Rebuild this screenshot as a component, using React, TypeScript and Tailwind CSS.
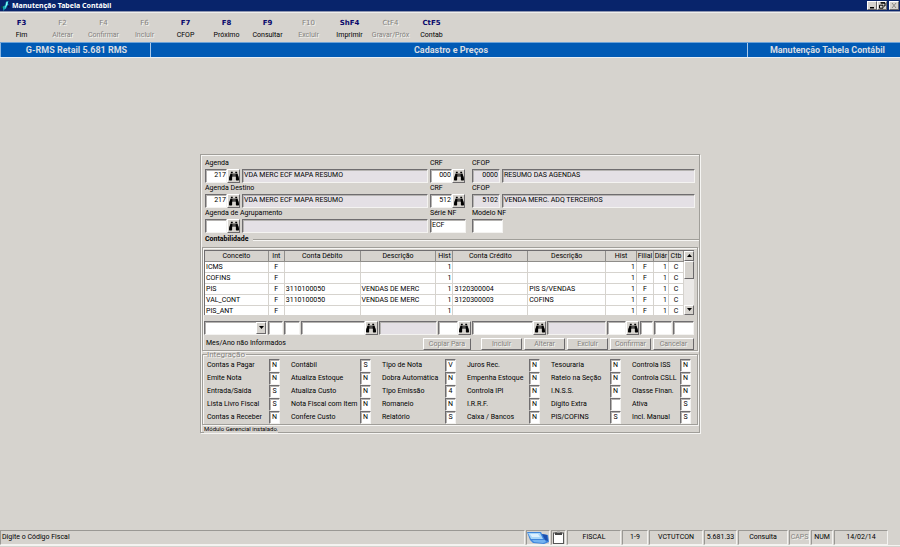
import React from "react";
import { FaBinoculars } from "react-icons/fa";

interface ToolbarKey {
  shortcut: string;
  label: string;
  disabled?: boolean;
}

interface Entry {
  conceito: string;
  debito?: string;
  descDebito?: string;
  credito?: string;
  descCredito?: string;
}

interface Flag {
  label: string;
  value: string;
}

const toolbarKeys: ToolbarKey[] = [
  { shortcut: "F3", label: "Fim" },
  { shortcut: "F2", label: "Alterar", disabled: true },
  { shortcut: "F4", label: "Confirmar", disabled: true },
  { shortcut: "F6", label: "Incluir", disabled: true },
  { shortcut: "F7", label: "CFOP" },
  { shortcut: "F8", label: "Próximo" },
  { shortcut: "F9", label: "Consultar" },
  { shortcut: "F10", label: "Excluir", disabled: true },
  { shortcut: "ShF4", label: "Imprimir" },
  { shortcut: "CtF4", label: "Gravar/Próx", disabled: true },
  { shortcut: "CtF5", label: "Contab" },
];

const columns = [
  { title: "Conceito", width: "w-[64px]" },
  { title: "Int", width: "w-[16px]" },
  { title: "Conta Débito", width: "w-[76px]" },
  { title: "Descrição", width: "w-[76px]" },
  { title: "Hist", width: "w-[17px]" },
  { title: "Conta Crédito", width: "w-[75px]" },
  { title: "Descrição", width: "w-[78px]" },
  { title: "Hist", width: "w-[31px]" },
  { title: "Filial", width: "w-[17px]" },
  { title: "Diár", width: "w-[15px]" },
  { title: "Ctb", width: "w-[15px]" },
];

const entries: Entry[] = [
  { conceito: "ICMS" },
  { conceito: "COFINS" },
  {
    conceito: "PIS",
    debito: "3110100050",
    descDebito: "VENDAS DE MERC",
    credito: "3120300004",
    descCredito: "PIS S/VENDAS",
  },
  {
    conceito: "VAL_CONT",
    debito: "3110100050",
    descDebito: "VENDAS DE MERC",
    credito: "3120300003",
    descCredito: "COFINS",
  },
  { conceito: "PIS_ANT" },
];

// One array per column of the "Integração" box
const flagColumns: Flag[][] = [
  [
    { label: "Contas a Pagar", value: "N" },
    { label: "Emite Nota", value: "N" },
    { label: "Entrada/Saída", value: "S" },
    { label: "Lista Livro Fiscal", value: "S" },
    { label: "Contas a Receber", value: "N" },
  ],
  [
    { label: "Contábil", value: "S" },
    { label: "Atualiza Estoque", value: "N" },
    { label: "Atualiza Custo", value: "N" },
    { label: "Nota Fiscal com Item", value: "N" },
    { label: "Confere Custo", value: "N" },
  ],
  [
    { label: "Tipo de Nota", value: "V" },
    { label: "Dobra Automática", value: "N" },
    { label: "Tipo Emissão", value: "4" },
    { label: "Romaneio", value: "N" },
    { label: "Relatório", value: "S" },
  ],
  [
    { label: "Juros Rec.", value: "N" },
    { label: "Empenha Estoque", value: "N" },
    { label: "Controla IPI", value: "N" },
    { label: "I.R.R.F.", value: "N" },
    { label: "Caixa / Bancos", value: "N" },
  ],
  [
    { label: "Tesouraria", value: "N" },
    { label: "Rateio na Seção", value: "N" },
    { label: "I.N.S.S.", value: "N" },
    { label: "Dígito Extra", value: "" },
    { label: "PIS/COFINS", value: "S" },
  ],
  [
    { label: "Controla ISS", value: "N" },
    { label: "Controla CSLL", value: "N" },
    { label: "Classe Finan.", value: "N" },
    { label: "Ativa", value: "S" },
    { label: "Incl. Manual", value: "S" },
  ],
];

const etched =
  "border border-[#a09e99] shadow-[1px_1px_0_#f6f5f3,inset_1px_1px_0_#f6f5f3]";
const sunken =
  "border border-t-[#6f6d6f] border-l-[#6f6d6f] border-b-[#f4f3f1] border-r-[#f4f3f1] shadow-[inset_1px_1px_0_#b5b3b1]";
const raised =
  "border border-t-white border-l-white border-b-[#6b696b] border-r-[#6b696b] bg-[#d6d3ce]";
const disabledText = "text-[#84827e] [text-shadow:1px_1px_0_#f4f3f1]";

interface FieldProps {
  id?: string;
  name?: string;
  value?: string;
  className: string;
  readOnly?: boolean;
}

const Field = ({ id, name, value = "", className, readOnly }: FieldProps) => (
  <input
    id={id}
    aria-label={name}
    defaultValue={value}
    readOnly={readOnly}
    className={`h-[14px] min-w-0 rounded-none pb-px pl-px outline-none ${sunken} ${
      readOnly ? "bg-[#e4e0e5]" : "bg-white"
    } ${className}`}
  />
);

const SearchButton = ({ name }: { name: string }) => (
  <button
    type="button"
    aria-label={name}
    className={`flex h-[14px] w-[13px] shrink-0 items-center justify-center ${raised}`}
  >
    <FaBinoculars size={10} className="text-black" />
  </button>
);

const TitleBar = () => (
  <header className="flex h-[12px] items-center border-b border-[#8f96b0] bg-[#08246b] pr-px text-white">
    <svg viewBox="0 0 12 12" className="mx-px h-[10px] w-[10px]">
      <path d="M0 6h5v3H0z" fill="#063a4a" />
      <path d="M6 1l3-1-1 3 1 1-2 2-1 3-2 1 1-4z" fill="#21d3d8" />
      <path d="M2 7l3-2v4l-2 3z" fill="#16a9b4" />
      <path d="M7 1l1 1-2 5-1 1z" fill="#b9ffff" />
      <path d="M8 6l3 1-2 1z" fill="#0a0f26" />
    </svg>
    <h1 className="grow font-['Noto_Sans',sans-serif] text-[7px] font-bold leading-[10px]">
      Manutenção Tabela Contábil
    </h1>
    <button type="button" aria-label="Minimizar" className={`h-[9px] w-[10px] ${raised}`}>
      <svg viewBox="0 0 8 7" className="h-[7px] w-[8px]">
        <rect x="2" y="5" width="4" height="1.5" fill="#000" />
      </svg>
    </button>
    <button type="button" aria-label="Restaurar" className={`h-[9px] w-[10px] ${raised}`}>
      <svg viewBox="0 0 8 7" className="h-[7px] w-[8px]" fill="none" stroke="#000">
        <path d="M3 1h4v3H6" strokeWidth="1" />
        <path d="M1.5 3.2h3.5v3H1.5z" strokeWidth="1" />
        <path d="M2.5 .8H7" strokeWidth="1.2" />
      </svg>
    </button>
    <button
      type="button"
      aria-label="Fechar"
      disabled
      className={`ml-[2px] h-[9px] w-[10px] ${raised}`}
    >
      <svg viewBox="0 0 8 7" className="h-[7px] w-[8px]" stroke="#8a8884">
        <path d="M2 1l4 5M6 1L2 6" strokeWidth="1" />
      </svg>
    </button>
  </header>
);

const Toolbar = () => (
  <nav className="flex h-[30px] border-t border-[#efeeec] pt-[4px] pl-px">
    {toolbarKeys.map((key) => (
      <button
        key={key.shortcut}
        type="button"
        disabled={key.disabled}
        className={`flex w-[41px] flex-col items-center whitespace-nowrap ${
          key.disabled ? disabledText : "text-black"
        }`}
      >
        <span
          className={`font-['DejaVu_Sans',sans-serif] text-[7px] leading-[12px] ${
            key.disabled ? "" : "font-bold text-[#08086b]"
          }`}
        >
          {key.shortcut}
        </span>
        <span className="leading-[12px]">{key.label}</span>
      </button>
    ))}
  </nav>
);

const Banner = () => (
  <div className="grid h-[16px] grid-cols-[150px_1fr_152px] border-t border-b border-t-[#6ba2d8] border-b-[#e8eef4] bg-[#005ab5] text-center text-[9px] font-bold leading-[14px] text-[#d9dde2]">
    <div className="border-l border-[#8ab6e2] pl-[2px]">G-RMS Retail 5.681 RMS</div>
    <div className="border-x border-[#a9c8e8] pl-[4px]">Cadastro e Preços</div>
    <div className="pr-[15px] text-right">Manutenção Tabela Contábil</div>
  </div>
);

interface AgendaRowProps {
  id: string;
  label: string;
  code: string;
  description: string;
  children: React.ReactNode;
}

const AgendaRow = ({ id, label, code, description, children }: AgendaRowProps) => (
  <div className="grid grid-cols-[1fr_40px_1fr] gap-x-[2px]">
    <div>
      <label htmlFor={id} className="block leading-[11px]">
        {label}
      </label>
      <div className="flex">
        <Field id={id} value={code} className="w-[22px] text-right" />
        <SearchButton name={`Pesquisar ${label}`} />
        <Field
          name={`Descrição ${label}`}
          value={description}
          readOnly
          className="ml-[2px] grow"
        />
      </div>
    </div>
    {children}
  </div>
);

interface CfopProps {
  id: string;
  crf: string;
  cfop: string;
  description: string;
}

const CrfCfop = ({ id, crf, cfop, description }: CfopProps) => (
  <>
    <div>
      <label htmlFor={`crf-${id}`} className="block leading-[11px]">
        CRF
      </label>
      <div className="flex">
        <Field id={`crf-${id}`} value={crf} className="w-[22px] text-right" />
        <SearchButton name="Pesquisar CRF" />
      </div>
    </div>
    <div>
      <label htmlFor={`cfop-${id}`} className="block leading-[11px]">
        CFOP
      </label>
      <div className="flex gap-[2px]">
        <Field
          id={`cfop-${id}`}
          value={cfop}
          readOnly
          className="w-[28px] pr-px text-right"
        />
        <Field name="Descrição CFOP" value={description} readOnly className="grow" />
      </div>
    </div>
  </>
);

const cell = "overflow-hidden border-r border-b border-[#d6d3ce] p-0 px-px";

const EntriesTable = () => (
  <div className="flex h-[65px] overflow-hidden border-l border-t border-[#6f6d6f] bg-white">
    <table className="h-fit grow table-fixed border-separate border-spacing-0 whitespace-nowrap leading-[10px]">
      <thead>
        <tr>
          {columns.map((col, i) => (
            <th
              key={i}
              className={`${col.width} border-r border-b border-[#8f8d8a] bg-[#d6d3ce] p-0 text-center font-normal`}
            >
              {col.title}
            </th>
          ))}
        </tr>
      </thead>
      <tbody>
        {entries.map((entry) => (
          <tr key={entry.conceito} className="h-[11px]">
            <td className={cell}>{entry.conceito}</td>
            <td className={`${cell} text-center`}>F</td>
            <td className={cell}>{entry.debito}</td>
            <td className={cell}>{entry.descDebito}</td>
            <td className={`${cell} text-right`}>1</td>
            <td className={cell}>{entry.credito}</td>
            <td className={cell}>{entry.descCredito}</td>
            <td className={`${cell} text-right`}>1</td>
            <td className={`${cell} text-center`}>F</td>
            <td className={`${cell} text-right`}>1</td>
            <td className={`${cell} text-center`}>C</td>
          </tr>
        ))}
      </tbody>
    </table>
    <div className="flex w-[10px] shrink-0 flex-col bg-[#ebe9e7]">
      <button
        type="button"
        aria-label="Subir"
        className={`flex h-[10px] items-center justify-center ${raised}`}
      >
        <svg viewBox="0 0 5 3" className="h-[3px] w-[5px]">
          <path d="M0 3l2.500-3L5 3z" />
        </svg>
      </button>
      <div className={`h-[18px] ${raised}`} />
      <button
        type="button"
        aria-label="Descer"
        className={`mt-auto flex h-[10px] items-center justify-center ${raised}`}
      >
        <svg viewBox="0 0 5 3" className="h-[3px] w-[5px]">
          <path d="M0 0l2.500 3L5 0z" />
        </svg>
      </button>
    </div>
  </div>
);

const EditRow = () => (
  <div className="mt-[6px] flex gap-px">
    <div className="relative w-[63px]">
      <select
        aria-label="Conceito"
        className={`block h-[14px] w-full appearance-none rounded-none bg-white ${sunken}`}
      >
        <option></option>
      </select>
      <span
        className={`pointer-events-none absolute right-px top-px flex h-[12px] w-[10px] items-center justify-center ${raised}`}
      >
        <svg viewBox="0 0 5 3" className="h-[3px] w-[5px]">
          <path d="M0 0l2.500 3L5 0z" />
        </svg>
      </span>
    </div>
    <Field name="Int" className="w-[15px]" />
    <Field name="Tipo" className="w-[16px]" />
    <div className="flex grow">
      <Field name="Conta Débito" className="w-[62px] grow" />
      <SearchButton name="Pesquisar Conta Débito" />
    </div>
    <Field name="Descrição Débito" readOnly className="w-[58px]" />
    <div className="flex">
      <Field name="Hist Débito" className="w-[20px]" />
      <SearchButton name="Pesquisar Hist Débito" />
    </div>
    <div className="flex grow">
      <Field name="Conta Crédito" className="w-[60px] grow" />
      <SearchButton name="Pesquisar Conta Crédito" />
    </div>
    <Field name="Descrição Crédito" readOnly className="w-[59px]" />
    <div className="flex">
      <Field name="Hist Crédito" className="w-[19px]" />
      <SearchButton name="Pesquisar Hist Crédito" />
    </div>
    <Field name="Filial" className="w-[13px]" />
    <Field name="Diár" className="w-[18px]" />
    <Field name="Ctb" className="w-[21px]" />
  </div>
);

const ActionButton = ({ label, className }: { label: string; className: string }) => (
  <button
    type="button"
    disabled
    className={`h-[12px] leading-[10px] ${raised} ${disabledText} ${className}`}
  >
    {label}
  </button>
);

const IntegrationBox = () => (
  <fieldset className={`mx-px min-w-0 pr-[6px] pl-[4px] ${etched}`}>
    <legend className={`pr-px text-[8px] leading-[8px] ${disabledText}`}>
      Integração
    </legend>
    <div className="grid grid-cols-[73px_80px_74px_73px_70px_1fr] gap-x-[11px]">
      {flagColumns.map((flags, col) => (
        <div key={col}>
          {flags.map((flag) => (
            <label
              key={flag.label}
              className="flex h-[13px] items-center justify-between whitespace-nowrap"
            >
              {flag.label}
              <input
                defaultValue={flag.value}
                className={`h-[13px] w-[11px] rounded-none bg-white pb-px text-center outline-none ${sunken}`}
              />
            </label>
          ))}
        </div>
      ))}
    </div>
  </fieldset>
);

const pane =
  "flex h-[15px] items-center justify-center border border-t-[#9a9894] border-l-[#9a9894] border-b-[#f4f3f1] border-r-[#f4f3f1]";

const StatusBar = () => (
  <footer className="mb-px flex h-[16px] gap-px whitespace-nowrap border-b border-[#f4f3f1] pr-[12px]">
    <div className={`${pane} grow justify-start pl-px`}>
      <span className="grow">Digite o Código Fiscal</span>
    </div>
    <div className={`${pane} w-[24px]`}>
      <svg viewBox="0 0 22 13" className="h-[13px] w-[22px]">
        <path d="M0 1l14 0 1 2 6 1 1 7-5 2-11-1-3-3z" fill="#3f86dc" />
        <path d="M1 2l12 0 3 6-12 0z" fill="#a9d6f8" />
        <path d="M3 3l8 0 2 3-8 0z" fill="#dcf0ff" />
        <path d="M5 9l13 0 1 2-3 1-9-1z" fill="#74b3f0" />
        <path d="M15 3l5 1 1 6-3-1z" fill="#1d4fae" />
      </svg>
    </div>
    <div className={`${pane} w-[15px]`}>
      <svg viewBox="0 0 13 13" className="h-[13px] w-[13px]">
        <rect x="1.500" y="2" width="10" height="10.500" fill="#fff" stroke="#555" />
        <path d="M3 1.500h7v2.500H3z" fill="#444" />
        <path d="M5 .5h3v1.500H5z" fill="#999" />
      </svg>
    </div>
    <div className={`${pane} w-[54px]`}>FISCAL</div>
    <div className={`${pane} w-[26px]`}>1-9</div>
    <div className={`${pane} w-[54px]`}>VCTUTCON</div>
    <div className={`${pane} w-[33px]`}>5.681.33</div>
    <div className={`${pane} w-[50px]`}>Consulta</div>
    <div className={`${pane} w-[21px] ${disabledText}`}>CAPS</div>
    <div className={`${pane} w-[22px]`}>NUM</div>
    <div className={`${pane} w-[54px]`}>14/02/14</div>
  </footer>
);

const App = () => {
  return (
    <div className="flex min-h-screen flex-col bg-[#d6d3ce] font-['Roboto',sans-serif] text-[7px] leading-[11px] text-black">
      <TitleBar />
      <Toolbar />
      <Banner />

      <main className="flex grow items-center justify-center pb-[2px]">
        <form className={`w-full max-w-[500px] pt-[3px] ${etched}`}>
          <div className="px-[4px]">
            <AgendaRow
              id="agenda"
              label="Agenda"
              code="217"
              description="VDA MERC ECF MAPA RESUMO"
            >
              <CrfCfop id="1" crf="000" cfop="0000" description="RESUMO DAS AGENDAS" />
            </AgendaRow>
            <AgendaRow
              id="destino"
              label="Agenda Destino"
              code="217"
              description="VDA MERC ECF MAPA RESUMO"
            >
              <CrfCfop
                id="2"
                crf="512"
                cfop="5102"
                description="VENDA MERC. ADQ TERCEIROS"
              />
            </AgendaRow>
            <AgendaRow id="grupo" label="Agenda de Agrupamento" code="" description="">
              <div>
                <label htmlFor="serie" className="block leading-[11px]">
                  Série NF
                </label>
                <Field id="serie" value="ECF" className="block w-[36px]" />
              </div>
              <div>
                <label htmlFor="modelo" className="block leading-[11px]">
                  Modelo NF
                </label>
                <Field id="modelo" className="block w-[31px]" />
              </div>
            </AgendaRow>
          </div>

          <div className="flex h-[14px] items-center gap-[5px] pl-[4px]">
            <h2 className="font-bold">Contabilidade</h2>
            <div className="h-[2px] grow border-t border-b border-t-[#a09e99] border-b-[#f6f5f3]" />
          </div>

          <section className={`mx-px pt-[2px] pr-[3px] pl-px ${etched}`}>
            <EntriesTable />
            <EditRow />
            <div className="mt-[3px] flex gap-[2px]">
              <p className="mr-auto pl-[2px]">Mes/Ano não Informados</p>
              <ActionButton label="Copiar Para" className="mr-[8px] w-[48px]" />
              <ActionButton label="Incluir" className="w-[41px]" />
              <ActionButton label="Alterar" className="w-[41px]" />
              <ActionButton label="Excluir" className="w-[41px]" />
              <ActionButton label="Confirmar" className="w-[41px]" />
              <ActionButton label="Cancelar" className="w-[41px]" />
            </div>
          </section>

          <IntegrationBox />

          {/* Message line sits over the bottom edge of the frame */}
          <p className="relative mt-px -mb-px ml-[3px] h-[7px] w-fit overflow-hidden bg-[#d6d3ce] text-[6px] leading-[6px]">
            Módulo Gerencial instalado.
          </p>
        </form>
      </main>

      <StatusBar />
    </div>
  );
};

export default App;
